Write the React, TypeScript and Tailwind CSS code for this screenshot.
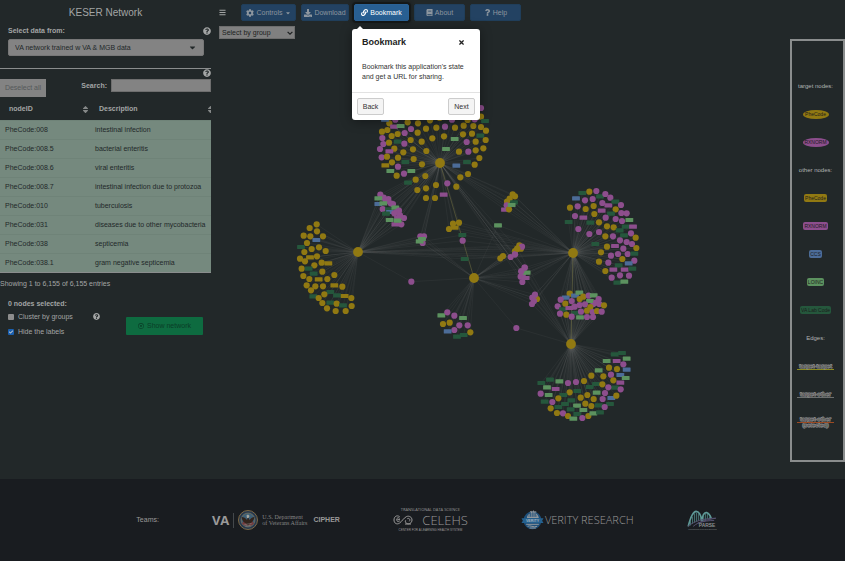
import type { ReactNode } from "react";
import {
  FaBars,
  FaBook,
  FaCaretDown,
  FaCheck,
  FaCog,
  FaDownload,
  FaLink,
  FaQuestion,
  FaQuestionCircle,
  FaRegDotCircle,
  FaSort,
  FaTimes,
} from "react-icons/fa";

/* ---------- network data ---------- */

/*
 * Each node is "<kind> <x>,<y>", in thirds of a canvas unit from the group's origin.
 * Lower case kinds are circles, upper case kinds are boxes.
 */
type Group = { origin: [number, number]; hubs: string[]; nodes: string };

const FILL: Record<string, string> = {
  g: "#917912",
  p: "#8d4e8d",
  G: "#917912",
  P: "#8d4e8d",
  D: "#25573c",
  L: "#5c925f",
  B: "#4c6c98",
};

const HUBS: Record<string, [number, number]> = {
  top: [440, 163],
  left: [358, 252],
  mid: [474, 278],
  right: [573, 253],
  low: [571, 344],
};

const GROUPS: Group[] = [
  {
    origin: [290, 90],
    hubs: ["top"],
    nodes:
      "g298,100 P312,110 L332,108 g292,120 g276,125 B285,89 g353,97 g384,100 g420,91 p486,89 g408,116 g439,113 p465,110 g495,113 g521,107 g550,108 g573,111 g588,122 g573,80 p573,54 D585,93 p554,88 g533,90 p316,89 g449,84 p277,144 p280,162 g297,158 g305,138 g323,132 p344,129 p363,117 g383,128 D323,155 p343,161 g362,150 g395,155 g427,145 g462,139 L494,147 g519,133 g546,131 D571,137 p530,156 g557,155 g587,150 p270,177 g313,176 P298,184 p275,202 g291,200 g340,187 g369,178 g409,183 L468,177 g507,185 p535,185 g557,181 g580,175 g568,204 g554,224 D531,216 B499,227 g324,203 g306,217 D346,216 G286,226 p324,230 L301,243 g371,207 g396,223 p342,251 L364,243 g320,257 D354,278 g377,269 g406,258 g382,300 g408,295 g438,285 p472,280 g511,262 g534,252 g499,290 P461,314 g408,324 g435,324",
  },
  {
    origin: [290, 90],
    hubs: ["top", "left"],
    nodes:
      "p271,314 p281,323 L265,325 p295,327 B265,342 p288,333 L280,340 p302,340 p309,342 p278,357 D297,358 B300,366 L316,353 p327,362 D288,371 p320,366 p313,370 p330,376 p342,384 P324,382 L299,390 P316,403 p334,403 L323,392",
  },
  {
    origin: [290, 210],
    hubs: ["left"],
    nodes:
      "g80,43 g59,54 g81,64 g41,77 g61,79 g99,79 B79,90 g51,99 D33,111 g87,112 g65,117 g43,126 g107,123 g81,139 G60,142 g30,146 g45,154 g95,158 G115,160 g73,166 g35,176 D56,176 g97,185 D71,191 g133,195 g40,198 g58,207 G86,208 g112,207 g50,226 g76,229 g99,229 G133,226 g157,230 g63,241 D121,246 g103,253 D70,259 g86,264 D141,256 G164,258 g184,264 g97,279 D121,278 g140,281 D159,286 g185,288 g111,295 g137,303 g167,303",
  },
  { origin: [290, 210], hubs: ["top", "left", "mid"], nodes: "p391,79 p402,79 p398,99 L389,94 L396,87" },
  { origin: [290, 210], hubs: ["top", "right"], nodes: "g489,41 g507,38 G494,53 g477,57" },
  { origin: [290, 210], hubs: ["left", "right"], nodes: "D517,75 p518,92 D524,147" },
  { origin: [290, 210], hubs: ["left", "mid"], nodes: "p364,215" },
  {
    origin: [290, 210],
    hubs: ["mid"],
    nodes:
      "L454,316 p472,307 p493,317 L519,324 g459,342 g479,338 p508,346 p493,360 B473,364 p533,346 D501,380 D521,375 g541,367",
  },
  {
    origin: [460, 170],
    hubs: ["top", "right"],
    nodes: "g158,73 g165,79 g149,86 g141,95 p140,106 D162,97 P135,119 g147,118 L155,105",
  },
  { origin: [460, 170], hubs: ["mid", "right"], nodes: "L114,166" },
  {
    origin: [460, 170],
    hubs: ["left", "mid", "right"],
    nodes: "g178,226 g183,236 g165,243 g172,236 p186,230 p165,253 p152,261 g129,258 g121,265",
  },
  { origin: [460, 170], hubs: ["top", "mid", "right"], nodes: "p194,293 p184,304 p189,312 p182,320 P197,324 p187,336 L200,308" },
  { origin: [460, 170], hubs: ["mid", "right", "low"], nodes: "g231,387 p225,374 p217,383 p222,393 p216,402" },
  { origin: [460, 170], hubs: ["mid", "low"], nodes: "p169,474" },
  { origin: [460, 170], hubs: ["top", "low"], nodes: "p165,253 g172,236 p194,293 p184,304" },
  {
    origin: [460, 170],
    hubs: ["right"],
    nodes:
      "D367,69 g388,65 p409,63 B348,85 p375,91 p398,87 D420,79 p436,72 p451,83 p427,99 P445,106 D466,95 p483,105 g330,113 p353,109 g377,117 g401,108 P425,122 g467,118 p484,129 p500,130 D453,131 p345,138 g403,132 P370,143 p437,143 D326,156 D391,158 g417,157 p467,147 p486,153 L508,150 p355,177 g441,169 g461,172 D497,170 P519,170 D479,181 p388,192 p417,186 p513,190 g436,199 p459,199 D492,196 g527,203 p480,211 p500,216 p516,222 D406,222 g441,230 P465,228 p490,236 g529,234 g423,247 p474,252 p453,257 p503,252 D523,251 g417,275 p445,278 g487,267 p523,272 B506,280 D476,286 P460,299 P494,299 D517,296 g436,303 p455,323 p480,316 p507,317 D472,338 L493,335",
  },
  {
    origin: [460, 170],
    hubs: ["right", "low"],
    nodes:
      "g329,371 B317,383 p302,389 B345,377 L358,368 g359,387 g370,380 p386,377 L401,376 p416,387 p335,393 g316,401 p400,402 L390,393 p293,409 D309,418 P328,414 p344,410 p359,405 p375,403 p408,398 g391,411 p418,402 g432,406 p300,431 g319,434 D346,429 p363,425 g381,422 p398,426 g411,423 p425,425 p335,440 L360,442 p381,441 p399,441",
  },
  {
    origin: [520, 280],
    hubs: ["low"],
    nodes:
      "D284,223 D306,219 L320,236 L260,243 P290,243 p310,253 g267,263 g291,267 B320,269 L236,271 p273,284 B301,285 L317,294 g214,287 g250,289 g280,301 P301,308 g192,303 D228,312 g247,313 p168,306 p144,309 L118,304 D90,299 D64,309 L81,322 P107,327 D209,321 D285,323 p265,322 p302,328 p62,341 L86,345 g149,337 D172,333 D130,345 g202,345 L230,338 p255,339 B274,354 g289,347 g115,355 g182,353 g221,357 p248,357 D74,365 p97,366 D154,361 D135,372 g196,371 L171,377 D236,376 g214,378 D270,372 p254,381 D115,381 g92,385 D152,388 L190,390 g111,399 p129,400 D172,402 g144,408 L160,416 g205,408 L220,400 D240,397 p187,414",
  },
];

const NODES = GROUPS.flatMap(({ origin, hubs, nodes }) =>
  nodes.split(" ").map((item) => {
    const [x, y] = item.slice(1).split(",").map(Number);
    return { kind: item[0], x: origin[0] + x / 3, y: origin[1] + y / 3, hubs };
  }),
);

function Network() {
  return (
    <svg viewBox="215 39 575 440" className="block w-full" role="img" aria-label="Network graph">
      <g stroke="#a0a0a0" strokeOpacity="0.1" strokeWidth="0.7">
        {NODES.flatMap((n, i) =>
          n.hubs.map((h) => <line key={`${i}-${h}`} x1={n.x} y1={n.y} x2={HUBS[h][0]} y2={HUBS[h][1]} />),
        )}
      </g>
      <g stroke="#8f8a4a" strokeOpacity="0.5" strokeWidth="0.8">
        <line x1="440" y1="163" x2="474" y2="278" />
        <line x1="573" y1="253" x2="571" y2="344" />
      </g>
      {NODES.map((n, i) =>
        n.kind === "g" || n.kind === "p" ? (
          <circle key={i} cx={n.x} cy={n.y} r="3.1" fill={FILL[n.kind]} />
        ) : (
          <rect key={i} x={n.x - 3.9} y={n.y - 2.1} width="7.8" height="4.2" rx="0.5" fill={FILL[n.kind]} />
        ),
      )}
      {Object.entries(HUBS).map(([name, [x, y]]) => (
        <circle key={name} cx={x} cy={y} r="4.9" fill="#917912" />
      ))}
    </svg>
  );
}

/* ---------- legend ---------- */

function LegendRow({ children }: { children: ReactNode }) {
  return <li className="flex h-7 items-center justify-center whitespace-nowrap">{children}</li>;
}

function Legend() {
  return (
    <aside className="w-[55px] shrink-0">
      <ul className="border-2 border-[#8a8d8d] pt-[31px] pb-6 pr-1 text-[5px] leading-[6px] text-[#1c1c1c]">
        <LegendRow>
          <span className="text-[6px] text-[#b0b3b3]">target nodes:</span>
        </LegendRow>
        <LegendRow>
          <span className="flex h-[9px] w-[26px] items-center justify-center rounded-[50%] bg-[#917912]">PheCode</span>
        </LegendRow>
        <LegendRow>
          <span className="flex h-[9px] w-[26px] items-center justify-center rounded-[50%] bg-[#8d4e8d]">RXNORM</span>
        </LegendRow>
        <LegendRow>
          <span className="text-[6px] text-[#b0b3b3]">other nodes:</span>
        </LegendRow>
        <LegendRow>
          <span className="rounded-xs bg-[#917912] px-[1px] py-[1px]">PheCode</span>
        </LegendRow>
        <LegendRow>
          <span className="rounded-xs bg-[#8d4e8d] px-[1px] py-[1px]">RXNORM</span>
        </LegendRow>
        <LegendRow>
          <span className="rounded-xs bg-[#4c6c98] px-[1px] py-[1px]">CCS</span>
        </LegendRow>
        <LegendRow>
          <span className="rounded-xs bg-[#5c925f] px-[1px] py-[1px]">LOINC</span>
        </LegendRow>
        <LegendRow>
          <span className="rounded-xs bg-[#25573c] px-[1px] py-[1px]">VA Lab Code</span>
        </LegendRow>
        <LegendRow>
          <span className="text-[6px] text-[#b0b3b3]">Edges:</span>
        </LegendRow>
        <LegendRow>
          <span className="w-[37px] border-b border-[#8a8a20] text-center text-[6px] text-[#3c3c3c] [-webkit-text-stroke:1px_#969696] [paint-order:stroke]">
            target-target
          </span>
        </LegendRow>
        <LegendRow>
          <span className="w-[37px] border-b border-[#6c6f6f] text-center text-[6px] text-[#3c3c3c] [-webkit-text-stroke:1px_#969696] [paint-order:stroke]">
            target-other
          </span>
        </LegendRow>
        <LegendRow>
          <span className="relative w-[37px] text-center text-[6px] text-[#3c3c3c] [-webkit-text-stroke:1px_#969696] [paint-order:stroke]">
            target-other
            <br />
            (selected)
            <span className="absolute inset-x-0 top-1/2 h-px bg-[#9c4a22]" />
          </span>
        </LegendRow>
      </ul>
    </aside>
  );
}

/* ---------- sidebar ---------- */

const ROWS = [
  ["PheCode:008", "intestinal infection"],
  ["PheCode:008.5", "bacterial enteritis"],
  ["PheCode:008.6", "viral enteritis"],
  ["PheCode:008.7", "intestinal infection due to protozoa"],
  ["PheCode:010", "tuberculosis"],
  ["PheCode:031", "diseases due to other mycobacteria"],
  ["PheCode:038", "septicemia"],
  ["PheCode:038.1", "gram negative septicemia"],
];

function Sidebar() {
  return (
    <aside className="w-[211px] shrink-0 text-[#a3a5a5]">
      <h1 className="pt-[5px] text-center text-[10px] leading-4">KESER Network</h1>
      <div className="flex items-center justify-between pt-[5px] pl-2 leading-[10px]">
        <label htmlFor="source" className="font-bold">
          Select data from:
        </label>
        <button aria-label="Help on data sources">
          <FaQuestionCircle size={8} />
        </button>
      </div>
      <div className="relative mt-[3px] mr-[7px] ml-2">
        <select
          id="source"
          className="block h-[17px] w-full appearance-none rounded-xs border border-[#777] bg-[#838383] pl-[6px] text-[#222829]"
        >
          <option>VA network trained w VA &amp; MGB data</option>
        </select>
        <FaCaretDown size={9} className="pointer-events-none absolute top-1 right-[7px] text-[#222829]" />
      </div>
      <hr className="mt-3 border-[#8a8d8d]" />
      <div className="flex justify-end">
        <button aria-label="Help on the table">
          <FaQuestionCircle size={8} />
        </button>
      </div>
      <div className="mt-[2px] flex items-start">
        <button className="h-[18px] w-[46px] bg-[#838383] text-[#55595a]">Deselect all</button>
        <label htmlFor="search" className="ml-auto pr-1 leading-[14px] font-bold">
          Search:
        </label>
        <input id="search" className="h-[13px] w-[100px] border border-[#6e6e6e] bg-[#838383] px-1 text-[#222829]" />
      </div>
      <div className="overflow-hidden">
        <table className="mt-[2px] w-[215px] table-fixed border-collapse text-left">
          <thead>
            <tr className="h-[21px]">
              <th className="w-[90px] pl-[9px]">
                <span className="flex items-center justify-between">
                  nodeID <FaSort size={9} className="text-[#858888]" />
                </span>
              </th>
              <th className="pl-[9px]">
                <span className="flex items-center justify-between">
                  Description <FaSort size={9} className="text-[#858888]" />
                </span>
              </th>
            </tr>
          </thead>
          <tbody className="border-b border-[#8a8d8d] bg-[#75897e] text-[#222829]">
            {ROWS.map(([id, text]) => (
              <tr key={id} className="h-[19px] border-t border-[#6f8378]">
                <td className="pl-[5px]">{id}</td>
                <td className="pl-[5px] whitespace-nowrap">{text}</td>
              </tr>
            ))}
          </tbody>
        </table>
      </div>
      <p className="pt-[6px] leading-[10px]">Showing 1 to 6,155 of 6,155 entries</p>
      <div className="flex items-end justify-between pt-[10px] pr-2 pl-2">
        <div className="leading-[10px]">
          <p className="font-bold">0 nodes selected:</p>
          <div className="flex items-center pt-[3px]">
            <label className="flex items-center gap-1">
              <input type="checkbox" className="size-[6px] appearance-none rounded-[1px] bg-[#8d8d8d]" />
              Cluster by groups
            </label>
            <button aria-label="Help on clustering" className="ml-5">
              <FaQuestionCircle size={7} />
            </button>
          </div>
          <label className="relative flex items-center gap-1 pt-[5px]">
            <input
              type="checkbox"
              defaultChecked
              className="peer size-[6px] appearance-none rounded-[1px] bg-[#8d8d8d] checked:bg-[#1a5fae]"
            />
            <FaCheck
              size={4}
              className="pointer-events-none absolute bottom-[3px] left-px hidden text-[#d0d0d0] peer-checked:block"
            />
            Hide the labels
          </label>
        </div>
        <button className="mb-[2px] flex h-[18px] w-[77px] items-center justify-center gap-[3px] rounded-[1px] bg-[#0e6b40] text-[#0a3d27]">
          <FaRegDotCircle size={6} />
          Show network
        </button>
      </div>
    </aside>
  );
}

/* ---------- top bar ---------- */

function NavButton({ children, width }: { children: ReactNode; width: string }) {
  return (
    <button
      className={`flex h-[17px] items-center justify-center gap-[2px] rounded-[2px] border border-[#203e5a] bg-[#234262] text-[#8d969f] ${width}`}
    >
      {children}
    </button>
  );
}

function BookmarkTour() {
  return (
    <div
      role="dialog"
      aria-labelledby="tour-title"
      className="absolute top-[25px] -left-[2px] z-10 w-32 rounded-[3px] bg-white text-[#333] shadow-[0_1px_12px_rgba(0,0,0,0.4)]"
    >
      <span className="absolute -top-[3px] left-[5px] border-x-[3px] border-b-[3px] border-x-transparent border-b-white" />
      <div className="flex items-center justify-between px-[10px] pt-2 text-[#222]">
        <h2 id="tour-title" className="text-[9px] leading-[11px] font-bold">
          Bookmark
        </h2>
        <button aria-label="Close" className="mr-[5px]">
          <FaTimes size={7} />
        </button>
      </div>
      <p className="px-[10px] pt-[14px] pb-[10px] leading-[10px] whitespace-nowrap">
        Bookmark this application's state
        <br />
        and get a URL for sharing.
      </p>
      <div className="flex justify-between border-t border-[#e2e2e2] px-[5px] py-[5px]">
        <button className="h-[17px] w-[27px] rounded-[2px] border border-[#ccc] bg-[#f4f4f4]">Back</button>
        <button className="h-[17px] w-[27px] rounded-[2px] border border-[#ccc] bg-[#f4f4f4]">Next</button>
      </div>
    </div>
  );
}

function TopBar() {
  return (
    <header className="flex items-center pt-1 pl-1">
      <button aria-label="Toggle sidebar" className="mr-[15px] text-[#a3a5a5]">
        <FaBars size={7} />
      </button>
      <nav className="flex gap-[5px]">
        <NavButton width="w-[55px]">
          <FaCog size={8} />
          Controls
          <FaCaretDown size={6} />
        </NavButton>
        <NavButton width="w-12">
          <FaDownload size={8} />
          Download
        </NavButton>
        <div className="relative">
          <button className="flex h-[17px] w-[55px] items-center justify-center gap-[2px] rounded-[2px] border border-[#2a6296] bg-[#285f92] text-white shadow-[0_0_0_2px_rgba(0,0,0,0.25),0_0_4px_2px_rgba(0,0,0,0.3)]">
            <FaLink size={7} />
            Bookmark
          </button>
          <BookmarkTour />
        </div>
        <NavButton width="w-[51px]">
          <FaBook size={7} />
          About
        </NavButton>
        <NavButton width="w-[51px]">
          <FaQuestion size={7} />
          Help
        </NavButton>
      </nav>
    </header>
  );
}

/* ---------- footer ---------- */

function VaSeal() {
  return (
    <svg viewBox="0 0 40 40" className="size-5" aria-hidden="true">
      <circle cx="20" cy="20" r="19" fill="#25384f" stroke="#7d6844" strokeWidth="2" />
      <circle cx="20" cy="20" r="14" fill="#3f6076" stroke="#8a7a58" strokeWidth="1.2" />
      <path d="M8 27c4 6 20 7 24 0l-4-6H12z" fill="#733c3e" />
      <path d="M7 14c5 0 8 2 11 6l2-6 3 6c3-4 6-6 10-6-1 7-5 11-9 13l-4 5-4-5c-5-2-8-6-9-13z" fill="#32241d" />
      <path d="M17 11l3-2 3 3-2 4h-3z" fill="#a8a8a0" />
      <path d="M13 29l14-2M15 32l10-1" stroke="#999" strokeWidth="1" />
    </svg>
  );
}

function CelehsMark() {
  return (
    <svg viewBox="0 0 60 30" className="h-[10px] w-5" fill="none" stroke="#999" strokeWidth="3" aria-hidden="true">
      <path d="M20 5C11-1 3 5 3 15s9 15 17 9c7-5 11-14 20-19 8-4 17 1 17 10s-9 14-16 10c-4-2-5-6-3-9" />
      <path d="M20 10c-4-4-9-1-9 4s5 8 9 4M13 14h8M36 27h18M43 11c6-3 10 3 6 8" />
    </svg>
  );
}

function VerityMark() {
  return (
    <svg viewBox="0 0 66 60" className="h-5 w-[23px]" aria-hidden="true">
      <circle cx="33" cy="31" r="27" fill="#1d4f7a" />
      <path d="M16 24c1-8 5-12 9-13V5l4-3 3 3 4-4 4 4 4-2v8c5 2 7 7 8 13z" fill="#91979c" />
      <path d="M22 12h22M19 18h28M27 6v14M34 5v15M41 6v14" stroke="#1d4f7a" strokeWidth="2" />
      <path d="M14 43h38M18 49c8-5 18 5 29 0M24 54h19" stroke="#91979c" strokeWidth="3" fill="none" />
      <path d="M0 25h66l-4 7 4 7H0l4-7z" fill="#25618f" />
      <text x="33" y="36" textAnchor="middle" fontSize="11" fontWeight="bold" fill="#a5b3bf">
        VERITY
      </text>
    </svg>
  );
}

function ParseMark() {
  return (
    <svg viewBox="0 0 90 64" className="h-[21px] w-[30px]" fill="none" aria-hidden="true">
      <path d="M3 50C8 30 17 4 27 4s15 12 18 30C46 18 51 6 59 8c7 2 11 9 14 17" stroke="#5f9a98" strokeWidth="5" />
      <path
        d="M10 34v13M16 20v22M22 10v28M28 8v28M34 10v22M40 22v10M50 17v16M56 10v21M62 12v15M68 20v8"
        stroke="#4f8583"
        strokeWidth="2.5"
      />
      <path d="M2 50C22 33 50 26 87 25 60 30 35 35 18 50M32 40c18-6 34-8 50-8" stroke="#555170" strokeWidth="3" />
      <text x="35" y="53" fontSize="15" fontWeight="bold" fill="#8d9192">
        PARSE
      </text>
      <text x="3" y="62" fontSize="6" fill="#7f8485">
        Translational Research Solutions
      </text>
    </svg>
  );
}

function Footer() {
  return (
    <footer className="flex items-center justify-center gap-[53px] bg-[#191c20] py-[28px] pl-2 whitespace-nowrap text-[#999]">
      <span>Teams:</span>
      <div className="flex h-[22px] items-center">
        <span className="font-['Open_Sans'] text-[13px] leading-4 font-bold">VA</span>
        <span className="mx-1 h-[15px] w-px bg-[#44484b]" />
        <VaSeal />
        <span className="pl-1 font-['Liberation_Serif',serif] text-[6px] leading-[6px] text-[#858585]">
          U.S. Department
          <br />
          of Veterans Affairs
        </span>
        <span className="pl-[6px] font-bold">CIPHER</span>
      </div>
      <div className="flex w-[75px] flex-col items-center">
        <span className="font-['Open_Sans'] text-[4px] leading-[5px]">TRANSLATIONAL DATA SCIENCE</span>
        <span className="flex w-full items-center justify-between">
          <CelehsMark />
          <span className="font-['Open_Sans'] text-[13px] leading-4 font-light">CELEHS</span>
        </span>
        <span className="text-[3px] leading-[5px]">CENTER FOR A LEARNING HEALTH SYSTEM</span>
      </div>
      <div className="flex items-center gap-[1px]">
        <VerityMark />
        <span className="font-['Open_Sans'] text-[11px] leading-4 font-light">VERITY RESEARCH</span>
      </div>
      <ParseMark />
    </footer>
  );
}

export default function App() {
  return (
    <div className="flex min-h-screen flex-col bg-[#222829] font-['Liberation_Sans',Arial,sans-serif] text-[7px] leading-[10px]">
      <div className="flex flex-1 gap-1">
        <Sidebar />
        <main className="min-w-0 flex-1">
          <TopBar />
          <div className="pt-[5px] pl-1">
            <div className="relative w-[76px]">
              <select
                aria-label="Select by group"
                className="block h-[13px] w-full appearance-none border border-[#6e6e6e] bg-[#808080] pl-[2px] text-[#1c1f20]"
              >
                <option>Select by group</option>
              </select>
              <svg
                viewBox="0 0 10 10"
                className="pointer-events-none absolute top-1 right-[2px] size-[6px]"
                fill="none"
                stroke="#1c1f20"
                strokeWidth="2"
                aria-hidden="true"
              >
                <path d="M1 3l4 4 4-4" />
              </svg>
            </div>
          </div>
          <div className="flex items-start">
            <div className="min-w-0 flex-1">
              <Network />
            </div>
            <Legend />
          </div>
        </main>
      </div>
      <Footer />
    </div>
  );
}
